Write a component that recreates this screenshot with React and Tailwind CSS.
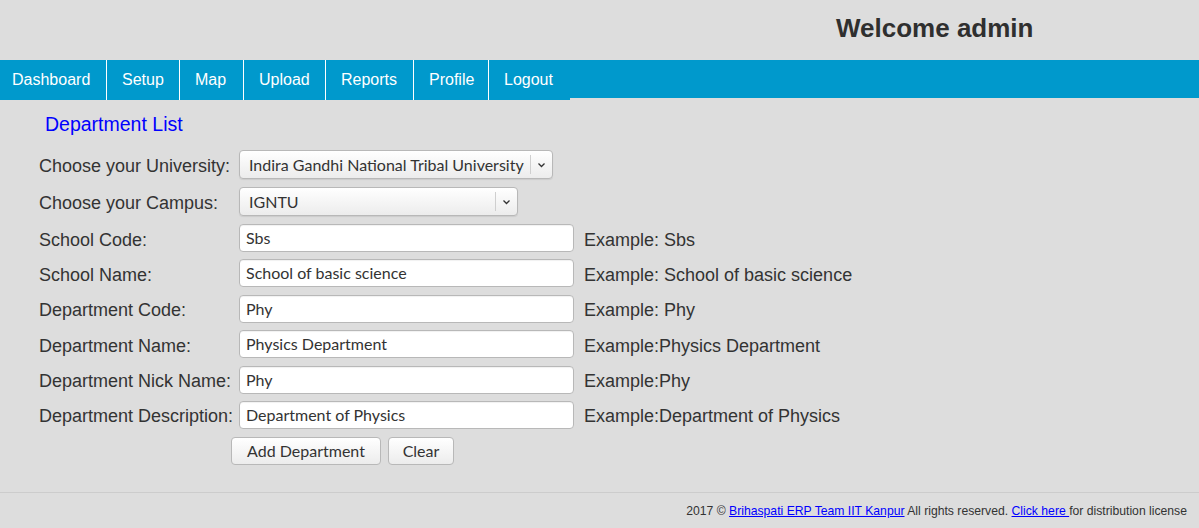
import React from "react";

const navItems = [
  ["Dashboard", "w-[106px] pl-[12px]", false],
  ["Setup", "w-[73px] pl-[15px]", true],
  ["Map", "w-[64px] pl-[15px]", true],
  ["Upload", "w-[82px] pl-[15px]", true],
  ["Reports", "w-[88px] pl-[15px]", true],
  ["Profile", "w-[75px] pl-[15px]", true],
  ["Logout", "w-[82px] pl-[15px]", true],
];

function Chevron() {
  return (
    <svg width="9" height="6" viewBox="0 0 9 6" className="block">
      <path d="M1.5 1.5 L4.5 4.5 L7.5 1.5" fill="none" stroke="#333" strokeWidth="1.3" />
    </svg>
  );
}

function Select({ value, width }) {
  return (
    <div
      className={`flex items-center h-[29px] rounded-[4px] border border-[#b8b8b8] bg-gradient-to-b from-[#ffffff] to-[#ececec] shadow-[0_1px_1px_rgba(0,0,0,0.08)] ${width}`}
    >
      <span className="flex-1 pl-[9px] text-[16px] text-[#333] whitespace-nowrap overflow-hidden" style={{ fontFamily: "Lato, 'Open Sans', sans-serif" }}>
        {value}
      </span>
      <span className="h-[19px] w-px bg-[#cfcfcf]" />
      <span className="w-[21px] flex justify-center"><Chevron /></span>
    </div>
  );
}

function Input({ value }) {
  return (
    <div
      className="flex items-center h-[28px] w-[335px] rounded-[4px] border border-[#b8b8b8] bg-white pl-[6px] text-[16px] text-[#333] shadow-[inset_0_1px_1px_rgba(0,0,0,0.06)]"
      style={{ fontFamily: "Lato, 'Open Sans', sans-serif" }}
    >
      {value}
    </div>
  );
}

export default function App() {
  const rows = [
    ["School Code:", "Sbs", "Example: Sbs"],
    ["School Name:", "School of basic science", "Example: School of basic science"],
    ["Department Code:", "Phy", "Example: Phy"],
    ["Department Name:", "Physics Department", "Example:Physics Department"],
    ["Department Nick Name:", "Phy", "Example:Phy"],
    ["Department Description:", "Department of Physics", "Example:Department of Physics"],
  ];
  return (
    <div className="w-[1199px] h-[528px] bg-[#dddddd] flex flex-col text-[#333]" style={{ fontFamily: "'Liberation Sans', Arial, sans-serif" }}>
      <div className="h-[60px] flex items-center">
        <div className="pl-[836px] pb-[4px] text-[26px] font-bold text-[#2f2f2f] leading-[30px]">Welcome admin</div>
      </div>
      <div className="flex items-start h-[40px]">
        {navItems.map(([n, w, b]) => (
          <div
            key={n}
            className={`h-[40px] flex items-center bg-[#0099cc] text-white text-[16px] ${w} ${b ? "border-l border-white" : ""}`}
          >
            {n}
          </div>
        ))}
        <div className="flex-1 h-[38px] bg-[#0099cc]" />
      </div>
      <div className="pl-[45px] pt-[13px] text-[19.5px] text-[#0000ff] leading-[22px]">Department List</div>
      <div className="pl-[39px] pt-[15px] flex flex-col">
        <div className="flex items-center h-[29px]">
          <div className="w-[200px] pt-[3px] text-[18px] whitespace-nowrap">Choose your University:</div>
          <Select value="Indira Gandhi National Tribal University" width="w-[314px]" />
        </div>
        <div className="flex items-center h-[29px] mt-[8px]">
          <div className="w-[200px] pt-[3px] text-[18px] whitespace-nowrap">Choose your Campus:</div>
          <Select value="IGNTU" width="w-[279px]" />
        </div>
        <div className="flex flex-col gap-[7.4px] mt-[8px]">
          {rows.map(([l, v, e]) => (
            <div key={l} className="flex items-center h-[28px]">
              <div className="w-[200px] pt-[4px] text-[18px] whitespace-nowrap">{l}</div>
              <Input value={v} />
              <div className="pl-[10px] pt-[4px] text-[18px] whitespace-nowrap">{e}</div>
            </div>
          ))}
        </div>
        <div className="flex gap-[7px] mt-[8.5px] pl-[192px]" style={{ fontFamily: "Lato, 'Open Sans', sans-serif" }}>
          <button className="h-[28px] w-[150px] rounded-[4px] border border-[#b8b8b8] bg-gradient-to-b from-[#ffffff] to-[#ececec] text-[16px] text-[#333]">Add Department</button>
          <button className="h-[28px] w-[66px] rounded-[4px] border border-[#b8b8b8] bg-gradient-to-b from-[#ffffff] to-[#ececec] text-[16px] text-[#333]">Clear</button>
        </div>
      </div>
      <div className="mt-auto border-t border-[#cccccc] h-[36px] flex items-center justify-end pr-[12px] pt-[1px] text-[12.2px] text-[#333]">
        <span>
          2017 © <a className="text-[#0000ff] underline">Brihaspati ERP Team IIT Kanpur</a> All rights reserved.{" "}
          <a className="text-[#0000ff] underline">Click here </a>for distribution license
        </span>
      </div>
    </div>
  );
}
